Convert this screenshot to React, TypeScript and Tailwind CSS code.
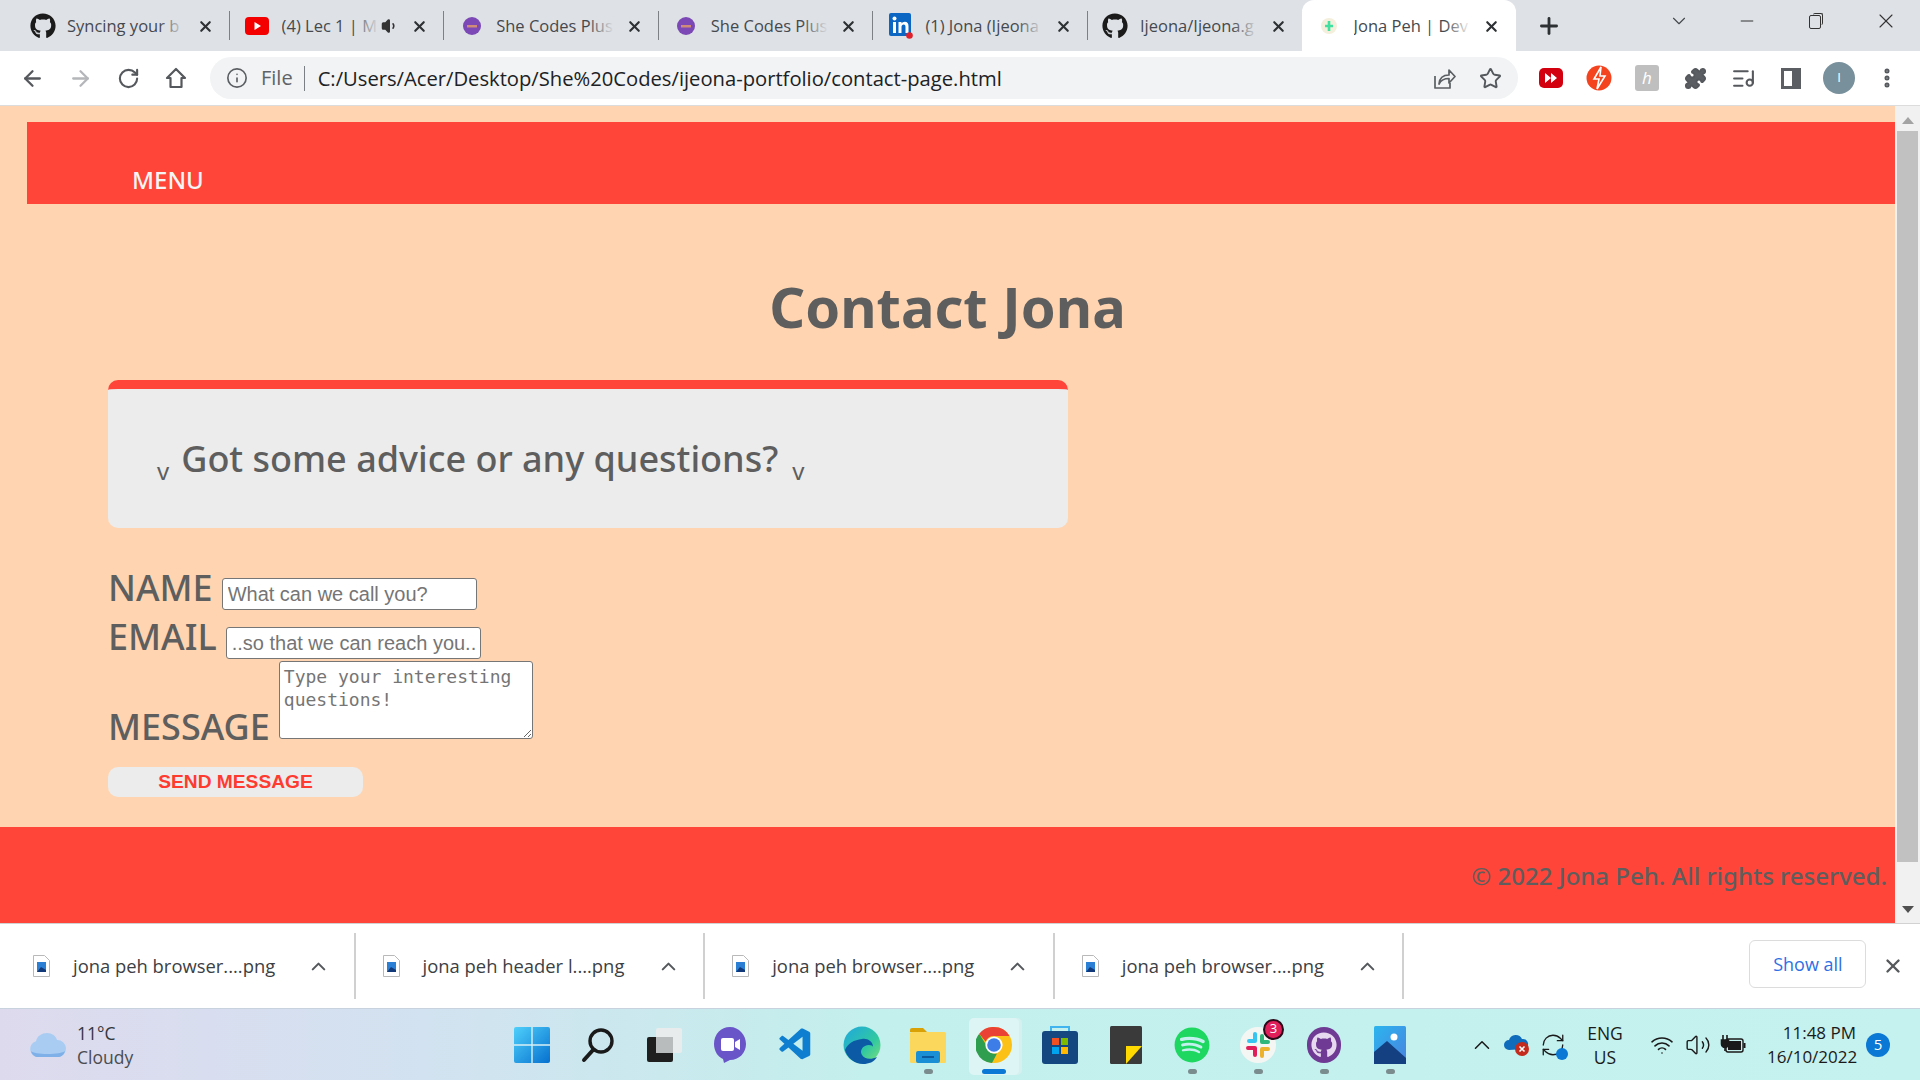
import { ArrowLeft, ArrowRight, ChevronDown, ChevronUp, Info, Minus, MoreVertical, Plus, Puzzle, RotateCw, Star, Volume1, Volume2, Wifi, X, ListMusic, RefreshCw } from "lucide-react";
import { FaGithub, FaSpotify } from "react-icons/fa";
import { VscVscode } from "react-icons/vsc";

const ui = "font-['Open_Sans',sans-serif]";

function GithubFav() {
  return <FaGithub className="text-[26px] text-[#1b1b1b]" />;
}

function YoutubeFav() {
  return (
    <svg width="24" height="18" viewBox="0 0 24 18">
      <rect width="24" height="18" rx="4" fill="#f40000" />
      <path d="M9.500 5v8l6.500-4z" fill="#fff" />
    </svg>
  );
}

function ShecodesFav() {
  return (
    <svg width="18" height="18" viewBox="0 0 18 18">
      <circle cx="9" cy="9" r="9" fill="#7b48b5" />
      <rect x="4" y="8" width="10" height="2.500" fill="#d08a78" />
    </svg>
  );
}

function LinkedinFav() {
  return (
    <svg width="24" height="26" viewBox="0 0 24 26">
      <rect width="22" height="23" rx="2" fill="#0a66c2" />
      <rect x="4" y="9" width="3" height="11" fill="#fff" />
      <circle cx="5.500" cy="5.500" r="2" fill="#fff" />
      <path d="M9.500 9h3v1.600c.8-1.200 1.900-1.900 3.300-1.900 2.600 0 3.700 1.700 3.700 4.500V20h-3v-6.200c0-1.500-.5-2.400-1.800-2.400s-2.200 1-2.200 2.500V20h-3z" fill="#fff" />
      <circle cx="20.500" cy="22.500" r="3.300" fill="#e0202a" />
    </svg>
  );
}

function JonaFav() {
  return (
    <svg width="18" height="18" viewBox="0 0 18 18">
      <circle cx="9" cy="9" r="8" fill="#f4efdc" />
      <path d="M9 4v10M5 9h8" stroke="#3fe0a0" strokeWidth="2.600" />
    </svg>
  );
}

const tabs = [
  { title: "Syncing your b", icon: <GithubFav /> },
  { title: "(4) Lec 1 | M", icon: <YoutubeFav />, muted: true },
  { title: "She Codes Plus", icon: <ShecodesFav /> },
  { title: "She Codes Plus", icon: <ShecodesFav /> },
  { title: "(1) Jona (Ijeona", icon: <LinkedinFav /> },
  { title: "Ijeona/Ijeona.g", icon: <GithubFav /> },
];

function Tab({ title, icon, muted, active }: { title: string; icon: React.ReactNode; muted?: boolean; active?: boolean }) {
  return (
    <div className={`relative flex h-[51px] w-[214.6px] shrink-0 items-center pt-[1px] ${active ? "rounded-t-[12px] bg-white" : ""}`}>
      <div className="flex w-[52px] shrink-0 justify-center pl-[3px]">{icon}</div>
      <div className="relative min-w-0 flex-1 overflow-hidden whitespace-nowrap text-[16.500px] text-[#45494e]">
        {title}
        <div className={`absolute inset-y-0 right-0 w-[26px] bg-gradient-to-r from-transparent ${active ? "to-white" : "to-[#dee1e6]"}`} />
      </div>
      {muted && <Volume1 className="ml-[2px] shrink-0 fill-[#333] text-[#333]" size={18} />}
      <X className="ml-[12px] mr-[16px] shrink-0 text-[#2e3134]" size={17} strokeWidth={3} />
      {!active && <div className="absolute right-0 top-[11px] h-[29px] w-px bg-[#7d8085]" />}
    </div>
  );
}

function TabBar() {
  return (
    <div className={`flex h-[51px] shrink-0 items-start bg-[#dee1e6] pl-[15px] ${ui}`}>
      {tabs.map((t, i) => (
        <Tab key={i} {...t} />
      ))}
      <div className="-ml-[1px]">
        <Tab title="Jona Peh | Dev" icon={<JonaFav />} active />
      </div>
      <Plus className="ml-[20px] mt-[13px] text-[#2e3134]" size={26} strokeWidth={2.600} />
      <ChevronDown className="ml-[106px] mt-[10px] text-[#44474b]" size={22} strokeWidth={1.200} />
      <Minus className="ml-[47px] mt-[11px] text-[#333]" size={20} strokeWidth={1.200} />
      <div className="relative ml-[52px] mt-[15px] h-[14px] w-[12px] rounded-[2px] border border-[#333]">
        <div className="absolute -right-[3px] -top-[3px] h-[12px] w-[10px] rounded-[2px] border-r border-t border-[#333]" />
      </div>
      <X className="ml-[53px] mt-[9px] text-[#333]" size={24} strokeWidth={1.100} />
    </div>
  );
}

function ToolBtn({ children }: { children: React.ReactNode }) {
  return <div className="flex h-[48px] w-[48px] shrink-0 items-center justify-center text-[#55585c]">{children}</div>;
}

function Toolbar() {
  return (
    <div className={`flex h-[55px] shrink-0 items-center border-b border-[#dcdcdc] bg-white pl-[8px] ${ui}`}>
      <ToolBtn><ArrowLeft size={25} strokeWidth={2.200} /></ToolBtn>
      <ToolBtn><ArrowRight className="text-[#b4b6b9]" size={25} strokeWidth={2.200} /></ToolBtn>
      <ToolBtn><RotateCw size={23} strokeWidth={2.200} /></ToolBtn>
      <ToolBtn>
        <svg width="24" height="24" viewBox="0 0 24 24" fill="none" stroke="currentColor" strokeWidth="2.200" strokeLinejoin="round">
          <path d="M12 3L3 12h3.500v9h11v-9H21z" />
        </svg>
      </ToolBtn>
      <div className="ml-[10px] flex h-[42px] w-[1308px] shrink-0 items-center rounded-full bg-[#f1f3f4] pl-[16px]">
        <Info className="text-[#5b5e62]" size={22} strokeWidth={1.800} />
        <span className="ml-[13px] text-[20px] text-[#5f6368]">File</span>
        <div className="ml-[11px] h-[25px] w-px bg-[#7c7f83]" />
        <span className="ml-[13px] flex-1 whitespace-nowrap text-[20.200px] text-[#202124]">C:/Users/Acer/Desktop/She%20Codes/ijeona-portfolio/contact-page.html</span>
        <svg className="mr-[23px] text-[#5b5e62]" width="24" height="24" viewBox="0 0 24 24" fill="none" stroke="currentColor" strokeWidth="1.700" strokeLinejoin="round">
          <path d="M3 10v12h15v-5" />
          <path d="M7 18c.5-6 4.500-9 10-9V4l6 6.500-6 6.500v-4.500c-4.500 0-8 1.500-10 5.500z" />
        </svg>
        <Star className="mr-[16px] text-[#55585c]" size={23} strokeWidth={2} />
      </div>
      <div className="ml-[9px] flex">
        <ToolBtn>
          <svg width="24" height="22" viewBox="0 0 24 22">
            <rect width="24" height="20" y="1" rx="5" fill="#d3000f" />
            <path d="M6 6l6 5-6 5zM12 6l6 5-6 5z" fill="#fff" />
          </svg>
        </ToolBtn>
        <ToolBtn>
          <svg width="26" height="28" viewBox="0 0 26 28">
            <circle cx="13" cy="14" r="12.500" fill="#f4431f" />
            <path d="M15 3L8 15h5l-2 10 8-13h-5z" fill="none" stroke="#fff" strokeWidth="1.600" />
          </svg>
        </ToolBtn>
        <ToolBtn>
          <div className="flex h-[26px] w-[24px] items-center justify-center rounded-[3px] bg-[#bfbfbf] text-[17px] italic text-white">h</div>
        </ToolBtn>
        <ToolBtn><Puzzle className="fill-[#5b5e62]" size={23} /></ToolBtn>
        <ToolBtn><ListMusic size={25} strokeWidth={2} /></ToolBtn>
        <ToolBtn>
          <div className="flex h-[21px] w-[20px] justify-end border-[3px] border-[#5b5e62]">
            <div className="h-full w-[6px] bg-[#5b5e62]" />
          </div>
        </ToolBtn>
        <ToolBtn>
          <div className="flex h-[32px] w-[32px] items-center justify-center rounded-full bg-[#78909c] text-[13px] text-white">I</div>
        </ToolBtn>
        <ToolBtn><MoreVertical size={24} strokeWidth={3} /></ToolBtn>
      </div>
    </div>
  );
}

function Scrollbar() {
  return (
    <div className="flex w-[25px] shrink-0 flex-col items-center bg-[#f1f1f1]">
      <div className="mt-[11px] h-0 w-0 border-x-[6px] border-b-[7px] border-x-transparent border-b-[#a3a3a3]" />
      <div className="mt-[7px] h-[731px] w-[21px] bg-[#c1c1c1]" />
      <div className="mt-[44px] h-0 w-0 border-x-[6px] border-t-[7px] border-x-transparent border-t-[#505050]" />
    </div>
  );
}

function ContactForm() {
  return (
    <form className="ml-[108px] mt-[42px] text-[36px] font-medium text-[#5e5e5e]">
      <div className="flex h-[49px] items-start">
        <label className="mt-[-7px] leading-[50px]">NAME</label>
        <input
          className="ml-[9px] mt-[8px] h-[32px] w-[255px] rounded-[3px] border border-[#767676] bg-white px-[5px] font-['Liberation_Sans',sans-serif] text-[20px] font-normal placeholder:text-[#757575]"
          placeholder="What can we call you?"
        />
      </div>
      <div className="flex h-[42px] items-start">
        <label className="mt-[-7px] leading-[50px]">EMAIL</label>
        <input
          className="ml-[9px] mt-[8px] h-[32px] w-[255px] rounded-[3px] border border-[#767676] bg-white px-[5px] font-['Liberation_Sans',sans-serif] text-[20px] font-normal placeholder:text-[#757575]"
          placeholder="..so that we can reach you.."
        />
      </div>
      <div className="flex items-end">
        <label className="mb-[-13px] leading-[50px]">MESSAGE</label>
        <textarea
          className="ml-[9px] h-[78px] w-[254px] resize rounded-[3px] border border-[#767676] bg-white px-[4px] py-[3px] font-['DejaVu_Sans_Mono',monospace] text-[18px] font-normal leading-[23px] placeholder:text-[#757575]"
          placeholder="Type your interesting questions!"
        />
      </div>
      <button
        type="button"
        className="mt-[28px] block h-[30px] w-[255px] rounded-[10px] bg-[#ececec] font-['Liberation_Sans',sans-serif] text-[19.200px] font-bold leading-[28px] text-[#ff3b30]"
      >
        SEND MESSAGE
      </button>
    </form>
  );
}

function Page() {
  return (
    <div className="flex min-h-0 flex-1">
      <div className="flex min-w-0 flex-1 flex-col bg-[#ffd4b0] font-['Noto_Sans',sans-serif]">
        <header className="ml-[27px] mt-[16px] flex h-[82px] shrink-0 items-end bg-[#ff4539] pb-[8px] pl-[105px]">
          <span className="text-[24px] font-medium leading-[33px] text-[#f5f5f5]">MENU</span>
        </header>
        <h1 className="mt-[64px] text-center text-[56px] font-bold leading-[76px] text-[#5e5e5e]">Contact Jona</h1>
        <section className="ml-[108px] mt-[36px] flex h-[148px] w-[960px] shrink-0 items-center rounded-[10px] border-t-[9px] border-[#ff4539] bg-[#ececec] pl-[49px]">
          <span className="mt-[24px] text-[24px] leading-none text-[#5e5e5e]">v</span>
          <span className="ml-[12px] mr-[14px] text-[36px] font-medium leading-[49px] text-[#5e5e5e]">Got some advice or any questions?</span>
          <span className="mt-[24px] text-[24px] leading-none text-[#5e5e5e]">v</span>
        </section>
        <ContactForm />
        <footer className="mt-auto flex h-[96px] shrink-0 items-center justify-end bg-[#ff4539] pr-[8px] pt-[2px]">
          <span className="text-[24px] font-medium text-[#5e5e5e]">© 2022 Jona Peh. All rights reserved.</span>
        </footer>
      </div>
      <Scrollbar />
    </div>
  );
}

function FileIcon() {
  return (
    <svg width="17" height="22" viewBox="0 0 17 22">
      <path d="M.5.5h11l5 5v16H.5z" fill="#fff" stroke="#b9b9b9" />
      <rect x="4" y="7" width="9" height="10" fill="#2b7fd4" />
      <path d="M4 17l4-5 5 3v2z" fill="#123a7a" />
    </svg>
  );
}

function DownloadItem({ name }: { name: string }) {
  return (
    <div className="flex h-[66px] w-[349.600px] shrink-0 items-center border-r-2 border-[#d0d0d0] pl-[27px]">
      <FileIcon />
      <span className="ml-[23px] w-[234px] whitespace-nowrap text-[18.400px] text-[#3c4043]">{name}</span>
      <ChevronUp className="text-[#55585c]" size={23} strokeWidth={2.200} />
    </div>
  );
}

function Downloads() {
  return (
    <div className={`flex h-[86px] shrink-0 items-center border-b border-t border-[#d2d2d2] border-b-[#c8d2de] bg-white pl-[6px] ${ui}`}>
      <DownloadItem name="jona peh browser....png" />
      <DownloadItem name="jona peh header l....png" />
      <DownloadItem name="jona peh browser....png" />
      <DownloadItem name="jona peh browser....png" />
      <button className="mb-[4px] ml-[345px] h-[48px] w-[117px] rounded-[6px] border border-[#dcdcdc] text-[18px] font-medium text-[#2f6fe4]">Show all</button>
      <X className="ml-[16px] text-[#55585c]" size={22} strokeWidth={2.600} />
    </div>
  );
}

function TaskIcon({ children, dot, active }: { children: React.ReactNode; dot?: boolean; active?: boolean }) {
  return (
    <div className="relative flex h-[71px] w-[66px] shrink-0 items-center justify-center">
      {active && <div className="absolute left-[8px] top-[9px] h-[57px] w-[50px] rounded-[5px] bg-[#def5f5] shadow-[3px_0_0_#d4f0ef]" />}
      <div className="relative flex items-center justify-center">{children}</div>
      {dot && <div className="absolute bottom-[6px] h-[5px] w-[9px] rounded-full bg-[#7b8c8e]" />}
      {active && <div className="absolute bottom-[6px] h-[5px] w-[24px] rounded-full bg-[#0a78d4]" />}
    </div>
  );
}

function WindowsIcon() {
  return (
    <svg width="36" height="36" viewBox="0 0 36 36">
      <defs>
        <linearGradient id="win" x1="0" y1="0" x2="1" y2="1">
          <stop offset="0" stopColor="#4fd0fb" />
          <stop offset="1" stopColor="#0670cf" />
        </linearGradient>
      </defs>
      <rect width="36" height="36" rx="2" fill="url(#win)" />
      <path d="M18 0v36M0 18h36" stroke="#d8f0f5" strokeWidth="1.400" />
    </svg>
  );
}

function SearchIcon() {
  return (
    <svg width="36" height="36" viewBox="0 0 36 36" fill="none">
      <circle cx="21" cy="14" r="11" stroke="#1a1a1a" strokeWidth="3.400" />
      <path d="M13 23l-9 10" stroke="#1a1a1a" strokeWidth="4" strokeLinecap="round" />
    </svg>
  );
}

function TaskViewIcon() {
  return (
    <svg width="36" height="36" viewBox="0 0 36 36">
      <rect x="1" y="10" width="26" height="25" rx="2" fill="#1f1f1f" />
      <rect x="10" y="1" width="26" height="25" rx="2" fill="#e8ecec" />
      <rect x="10" y="10" width="17" height="16" fill="#b9bcbc" />
    </svg>
  );
}

function MeetIcon() {
  return (
    <svg width="34" height="38" viewBox="0 0 34 38">
      <path d="M17 1C8 1 1 8 1 18c0 7 4 13 9 15l1 4 6-3c9 0 16-7 16-16S26 1 17 1z" fill="#6a55c8" />
      <rect x="8" y="12" width="13" height="13" rx="2" fill="#fff" />
      <path d="M22 16l5-3v11l-5-3z" fill="#fff" />
    </svg>
  );
}

function EdgeIcon() {
  return (
    <svg width="38" height="38" viewBox="0 0 38 38">
      <defs>
        <linearGradient id="edge" x1="0" y1="0" x2="1" y2="1">
          <stop offset="0" stopColor="#1fa7e0" />
          <stop offset="0.6" stopColor="#30c8a0" />
          <stop offset="1" stopColor="#7fe07a" />
        </linearGradient>
      </defs>
      <circle cx="19" cy="19" r="18.500" fill="url(#edge)" />
      <path d="M2 24c2 8 10 14 18 14 6 0 11-2 14-7-6 3-13 2-15-2-2-3-1-7 3-9 3-2 8-1 8 1 0-6-6-9-11-8C11 14 5 17 2 24z" fill="#0c5aa6" />
    </svg>
  );
}

function ExplorerIcon() {
  return (
    <svg width="38" height="38" viewBox="0 0 38 38">
      <path d="M1 4a2 2 0 012-2h11l4 4H1z" fill="#d9a106" />
      <rect x="1" y="6" width="36" height="31" rx="1.500" fill="#fbd75b" />
      <rect x="7" y="25" width="24" height="12" rx="2" fill="#1a8fd6" />
      <rect x="13" y="30" width="12" height="2" fill="#0a5aa0" />
    </svg>
  );
}

function ChromeIcon() {
  return (
    <svg width="36" height="36" viewBox="0 0 36 36">
      <circle cx="18" cy="18" r="18" fill="#fbc116" />
      <path d="M18 0a18 18 0 0115.600 9H18a9 9 0 00-8.400 5.600L3.200 6.800A18 18 0 0118 0z" fill="#ea4335" />
      <path d="M3.200 6.800l7 11.200a9 9 0 0010.800 8.500L16 36A18 18 0 013.200 6.800z" fill="#2f9e4f" />
      <circle cx="18" cy="18" r="8.600" fill="#fff" />
      <circle cx="18" cy="18" r="6.800" fill="#3d7de8" />
    </svg>
  );
}

function StoreIcon() {
  return (
    <svg width="36" height="40" viewBox="0 0 36 40">
      <path d="M9 8V2h18v6" fill="none" stroke="#3fb4ee" strokeWidth="2" />
      <rect y="6" width="36" height="33" rx="3" fill="#14467f" />
      <rect x="10" y="13" width="7" height="7" fill="#f25022" />
      <rect x="19" y="13" width="7" height="7" fill="#7fba00" />
      <rect x="10" y="22" width="7" height="7" fill="#00a4ef" />
      <rect x="19" y="22" width="7" height="7" fill="#ffb900" />
    </svg>
  );
}

function StickyIcon() {
  return (
    <svg width="32" height="38" viewBox="0 0 32 38">
      <rect width="32" height="38" rx="1.500" fill="#3a3a3a" />
      <path d="M16 38V20h16L16 38z" fill="#ffd900" />
    </svg>
  );
}

function SlackIcon() {
  return (
    <div className="relative">
      <svg width="36" height="38" viewBox="0 0 36 38">
        <circle cx="18" cy="19" r="18" fill="#f4f6f4" />
        <path d="M15 8v7M9 15h6" stroke="#36c5f0" strokeWidth="4" strokeLinecap="round" />
        <path d="M28 16h-6M22 10v6" stroke="#2eb67d" strokeWidth="4" strokeLinecap="round" />
        <path d="M22 30v-7M22 23h6" stroke="#ecb22e" strokeWidth="4" strokeLinecap="round" />
        <path d="M8 22h7M15 22v7" stroke="#e01e5a" strokeWidth="4" strokeLinecap="round" />
      </svg>
      <div className="absolute -right-[8px] -top-[7px] flex h-[21px] w-[21px] items-center justify-center rounded-full border-2 border-[#2a0a18] bg-[#e01e5a] text-[13px] text-white">3</div>
    </div>
  );
}

function GithubDesktopIcon() {
  return (
    <div className="flex h-[36px] w-[34px] items-center justify-center rounded-full bg-[#6e3a94]">
      <FaGithub className="text-[26px] text-[#e6d8ef]" />
    </div>
  );
}

function PhotosIcon() {
  return (
    <svg width="32" height="38" viewBox="0 0 32 38">
      <defs>
        <linearGradient id="photo" x1="0" y1="0" x2="1" y2="1">
          <stop offset="0" stopColor="#2bb5ee" />
          <stop offset="1" stopColor="#4a82e0" />
        </linearGradient>
      </defs>
      <rect width="32" height="38" rx="1.500" fill="url(#photo)" />
      <circle cx="20" cy="11" r="3.500" fill="#fff" />
      <path d="M0 26l13-11 19 17v6H0z" fill="#143f80" />
    </svg>
  );
}

function BatteryPlug() {
  return (
    <svg width="26" height="22" viewBox="0 0 26 22">
      <path d="M3 1v5M7 1v5M1.500 6h7v4a3.500 3.500 0 01-7 0zM5 13v4" stroke="#1a1a1a" strokeWidth="1.600" fill="#1a1a1a" />
      <rect x="6" y="5" width="17" height="13" rx="2" fill="none" stroke="#1a1a1a" strokeWidth="1.400" />
      <rect x="8" y="7" width="13" height="9" fill="#1a1a1a" />
      <rect x="23.500" y="9" width="2" height="5" fill="#1a1a1a" />
    </svg>
  );
}

function Taskbar() {
  return (
    <div className={`flex h-[71px] shrink-0 items-center bg-[linear-gradient(90deg,#dedaee_0%,#d2e2f0_22%,#c3efec_45%,#c5f1ee_100%)] ${ui}`}>
      <svg className="ml-[29px] shrink-0" width="38" height="26" viewBox="0 0 38 26">
        <path d="M9 25a8 8 0 01-2-15.700C8 4 13 1 18 1c5 0 9 3 10 7a8.500 8.500 0 011 17z" fill="#a9cdf2" />
        <path d="M2 19c3 4 30 4 34 0-1 4-4 6-7 6H9c-3 0-6-2-7-6z" fill="#7fb1e8" />
      </svg>
      <div className="ml-[10px] w-[80px] shrink-0 text-[17.500px] leading-[24px] text-[#33363a]">
        <div>11°C</div>
        <div className="text-[#4a4d52]">Cloudy</div>
      </div>
      <div className="ml-[342px] flex">
        <TaskIcon><WindowsIcon /></TaskIcon>
        <TaskIcon><SearchIcon /></TaskIcon>
        <TaskIcon><TaskViewIcon /></TaskIcon>
        <TaskIcon><MeetIcon /></TaskIcon>
        <TaskIcon><VscVscode className="text-[38px] text-[#0e7fd0]" /></TaskIcon>
        <TaskIcon><EdgeIcon /></TaskIcon>
        <TaskIcon dot><ExplorerIcon /></TaskIcon>
        <TaskIcon active><ChromeIcon /></TaskIcon>
        <TaskIcon><StoreIcon /></TaskIcon>
        <TaskIcon><StickyIcon /></TaskIcon>
        <TaskIcon dot><FaSpotify className="text-[36px] text-[#1ed760]" /></TaskIcon>
        <TaskIcon dot><SlackIcon /></TaskIcon>
        <TaskIcon dot><GithubDesktopIcon /></TaskIcon>
        <TaskIcon dot><PhotosIcon /></TaskIcon>
      </div>
      <ChevronUp className="ml-[46px] shrink-0 text-[#1a1a1a]" size={26} strokeWidth={1.400} />
      <svg className="ml-[9px] shrink-0" width="26" height="24" viewBox="0 0 26 24">
        <path d="M5 17a5 5 0 010-10 7 7 0 0113-1 5 5 0 012 10z" fill="#0f6cbd" />
        <circle cx="18" cy="16" r="7" fill="#c42b1c" />
        <path d="M15.500 13.500l5 5M20.500 13.500l-5 5" stroke="#fff" strokeWidth="1.600" />
      </svg>
      <div className="relative ml-[10px]">
        <RefreshCw className="text-[#1a1a1a]" size={26} strokeWidth={1.200} />
        <div className="absolute bottom-[-2px] right-[-2px] h-[12px] w-[12px] rounded-full bg-[#0a78d4]" />
      </div>
      <div className="ml-[16px] w-[46px] text-center text-[17.500px] leading-[24px] text-[#1a1a1a]">
        <div>ENG</div>
        <div>US</div>
      </div>
      <Wifi className="ml-[22px] text-[#1a1a1a]" size={24} strokeWidth={1.600} />
      <Volume2 className="ml-[11px] text-[#1a1a1a]" size={26} strokeWidth={1.300} />
      <div className="ml-[9px]"><BatteryPlug /></div>
      <div className="ml-[21px] w-[89px] whitespace-nowrap text-right text-[17px] leading-[24px] text-[#1a1a1a]">
        <div>11:48 PM</div>
        <div>16/10/2022</div>
      </div>
      <div className="ml-[10px] flex h-[24px] w-[24px] items-center justify-center rounded-full bg-[#0a78d4] text-[15px] text-white">5</div>
    </div>
  );
}

export default function App() {
  return (
    <div className="flex h-[1080px] w-[1920px] flex-col overflow-hidden">
      <TabBar />
      <Toolbar />
      <Page />
      <Downloads />
      <Taskbar />
    </div>
  );
}
